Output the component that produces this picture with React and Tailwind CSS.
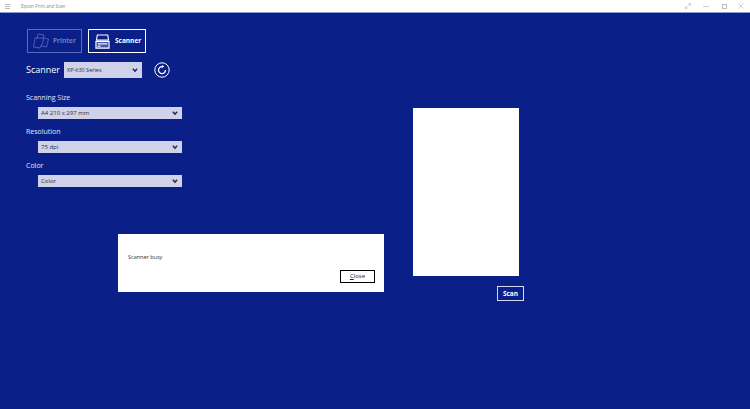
const font = { fontFamily: '"Open Sans", "Noto Sans", sans-serif' };

function Chevron({ size = 6 }) {
  return (
    <svg width={size} height={size} viewBox="0 0 10 10" fill="none" stroke="#1b2450" strokeWidth="2.4">
      <path d="M1.5 3 L5 7 L8.5 3" />
    </svg>
  );
}

function Select({ label, className }) {
  return (
    <div className={`flex items-center justify-between bg-[#cfd2e8] pl-[3px] pr-[4px] text-[#2b2d45] ${className}`}>
      <span>{label}</span>
      <Chevron />
    </div>
  );
}

function Field({ title, value, className }) {
  return (
    <div className={className}>
      <div className="h-[12px] text-[7px] leading-[12px] text-[#e2e5f5]">{title}</div>
      <Select label={value} className="ml-[12px] mt-[3px] h-[12px] w-[144px] text-[6px]" />
    </div>
  );
}

function PrinterIcon() {
  return (
    <svg width="18" height="16" viewBox="0 0 18 16" fill="none" stroke="#5a6cc0" strokeWidth="0.8">
      <path d="M6 1 L12 2 L11.5 5 L16.5 6 L14.5 14 L9 12.8" />
      <path d="M6 1 L5 6" />
      <path d="M3 5 L11.5 5 L10.5 11 L9 12.8 L8 15 L1.5 14 Z" />
    </svg>
  );
}

function ScannerIcon() {
  return (
    <svg width="15" height="15" viewBox="0 0 16 16" fill="none" stroke="#fff" strokeWidth="1.2">
      <path d="M2.5 1 H13.5 L14.5 6.5 H1.5 Z" />
      <path d="M1 8 H15 V15 H1 Z" fill="#fff" fillOpacity="0.25" />
      <path d="M3 10.5 H13" />
      <path d="M3 13 H6" />
    </svg>
  );
}

function RefreshIcon() {
  return (
    <svg width="16" height="16" viewBox="0 0 16 16" fill="none" stroke="#fff">
      <circle cx="8" cy="8" r="7.2" strokeWidth="1" />
      <path d="M8 4.6 A3.5 3.5 0 1 0 11.5 8" strokeWidth="1.3" />
      <path d="M7.8 3 L10.4 4.6 L7.8 6.2 Z" fill="#fff" stroke="none" />
    </svg>
  );
}

export default function App() {
  return (
    <div className="relative flex h-[409px] w-[750px] flex-col overflow-hidden bg-[#0a1f88]" style={font}>
      <header className="flex h-[13px] items-center border-b border-[#8f9ad0] bg-white text-[#888]">
        <div className="ml-[5px] flex w-[5px] flex-col gap-[1px]">
          <span className="h-px bg-[#bbb]" />
          <span className="h-px bg-[#bbb]" />
          <span className="h-px bg-[#bbb]" />
        </div>
        <span className="ml-[11px] text-[4.5px]">Epson Print and Scan</span>
        <div className="ml-auto mr-[6px] flex items-center gap-[12px]">
          <svg width="6" height="6" viewBox="0 0 6 6" stroke="#bbb" fill="none" strokeWidth="0.7"><path d="M0.5 5.5 L5.5 0.5 M3.5 0.5 H5.5 V2.5 M0.5 3.5 V5.5 H2.5" /></svg>
          <span className="h-px w-[6px] bg-[#ccc]" />
          <span className="ml-[1px] mr-[-1px] h-[5px] w-[5px] border border-[#bbb]" />
          <svg width="6" height="6" viewBox="0 0 6 6" stroke="#bbb" fill="none" strokeWidth="0.7"><path d="M0.5 0.5 L5.5 5.5 M5.5 0.5 L0.5 5.5" /></svg>
        </div>
      </header>

      <main className="flex">
        <section className="w-[413px] pl-[26px] pt-[16px]">
          <div className="ml-[1px] flex gap-[6px]">
            <div className="flex h-[24px] w-[55px] items-center gap-[3px] border border-[#5a6cc0] pl-[4px] text-[6.5px] font-bold text-[#6a7bc8]">
              <PrinterIcon />
              <span>Printer</span>
            </div>
            <div className="flex h-[24px] w-[58px] items-center gap-[5px] border border-white pl-[6px] text-[6.5px] font-bold text-white">
              <ScannerIcon />
              <span>Scanner</span>
            </div>
          </div>

          <div className="mt-[9px] flex items-center">
            <span className="w-[38px] text-[9px] text-white">Scanner</span>
            <Select label="XP-630 Series" className="h-[16px] w-[78px] text-[5.5px]" />
            <span className="ml-[12px] flex"><RefreshIcon /></span>
          </div>

          <Field title="Scanning Size" value="A4 210 x 297 mm" className="mt-[14px]" />
          <Field title="Resolution" value="75 dpi" className="mt-[7px]" />
          <Field title="Color" value="Color" className="mt-[7px]" />
        </section>

        <section className="flex w-[111px] flex-col pt-[95px]">
          <div className="h-[168px] w-[106px] bg-white" />
          <div className="ml-[84px] mt-[10px] flex h-[15px] w-[27px] items-center justify-center border border-[#d5d9f0] text-[6.5px] font-bold text-white">
            Scan
          </div>
        </section>
      </main>

      <div className="absolute left-[118px] top-[234px] flex h-[58px] w-[266px] flex-col bg-white pl-[10px] pr-[9px] pt-[19px] text-[#333]">
        <span className="text-[5.5px] leading-[8px]">Scanner busy</span>
        <div className="ml-auto mt-[9px] flex h-[13px] w-[35px] items-center justify-center border border-black text-[6px] text-[#222]">
          <span><span className="underline">C</span>lose</span>
        </div>
      </div>
    </div>
  );
}
